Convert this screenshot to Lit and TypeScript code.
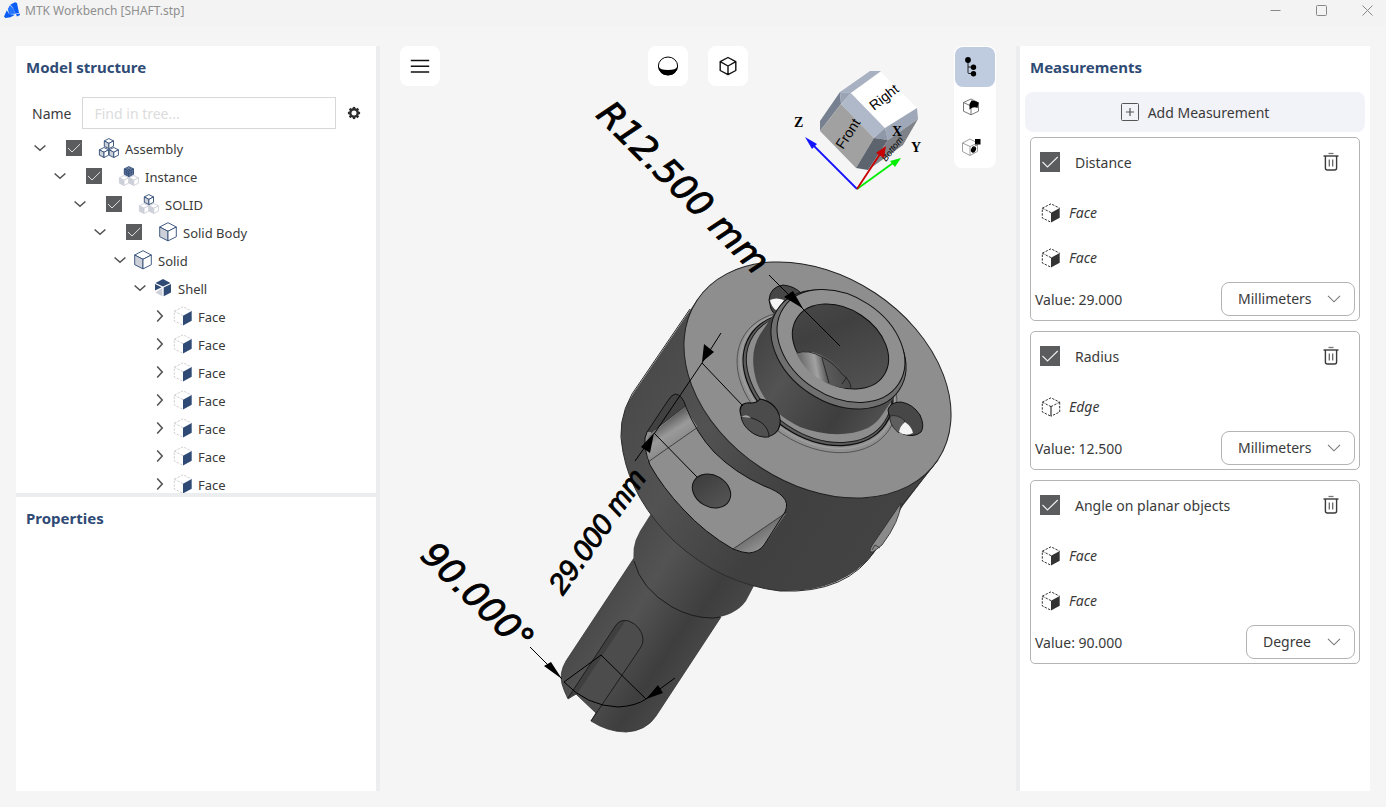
import { LitElement, html, svg, css, nothing } from "lit";
import { customElement, property } from "lit/decorators.js";
import { classMap } from "lit/directives/class-map.js";

const base = css`
  :host {
    font-family: "Noto Sans", "Open Sans", sans-serif;
    color: #3a3a3a;
  }
  * {
    box-sizing: border-box;
  }
  button,
  input,
  select {
    font: inherit;
    color: inherit;
    margin: 0;
  }
  button {
    display: flex;
    align-items: center;
    justify-content: center;
    padding: 0;
    border: 0;
    background: none;
  }
  svg {
    display: block;
  }
  .tick {
    appearance: none;
    flex: none;
    width: 16px;
    height: 16px;
    background: #5b5c5e;
  }
  .tick:checked {
    background: #5b5c5e
      url("data:image/svg+xml,%3Csvg xmlns='http://www.w3.org/2000/svg' viewBox='0 0 16 16'%3E%3Cpath d='M2 8l4 4 8.200-8' fill='none' stroke='%23eee' stroke-width='.9'/%3E%3C/svg%3E")
      center / 100% no-repeat;
  }
`;

/* ---------- icons ---------- */

const NAVY = "#2f4b75";

const smallCube = (x: number, y: number, line: string, top: string, left: string, right: string) => svg`
  <g transform="translate(${x} ${y})" stroke=${line} stroke-width=".9" stroke-linejoin="round">
    <path d="M5 0L9.600 2.300 5 4.800 .4 2.300z" fill=${top} />
    <path d="M.4 2.300L5 4.800V10L.4 7.700z" fill=${left} />
    <path d="M9.600 2.300L5 4.800V10l4.600-2.300z" fill=${right} />
  </g>`;

const cluster = (kind: "assembly" | "instance" | "part") => {
  const pale = (x: number) => smallCube(x, 9.5, "#cdd0d8", "#fff", "#cdd0d8", "#fff");
  const solid = (x: number, y: number) => smallCube(x, y, NAVY, "#fff", "#cdd0d8", "#fff");
  return html`<svg width="22" height="20" viewBox="0 0 22 20" aria-hidden="true">
    ${kind === "assembly" ? [solid(1, 9.5), solid(10.8, 9.5), solid(5.9, 0.6)] : nothing}
    ${kind === "instance" ? [pale(1), pale(10.8), smallCube(5.9, 0.6, NAVY, "#8090ad", "#5a7097", "#6c80a3")] : nothing}
    ${kind === "instance" ? svg`<path d="M8.500 2.200l4.600 2.500M13.200 2.200l-4.600 2.500M6.300 5.500l4.600 2.500M15.500 5.500l-4.600 2.500M8.600 4v5M13.200 4v5" stroke=${NAVY} stroke-width=".7"/>` : nothing}
    ${kind === "part" ? [pale(1), pale(10.8), solid(5.9, 0.6)] : nothing}
  </svg>`;
};

const bodyIcon = html`<svg width="20" height="20" viewBox="0 0 20 20" aria-hidden="true">
  <g stroke=${NAVY} stroke-width=".9" stroke-linejoin="round">
    <path d="M10 .7l8.300 4.300L10 9.300 1.700 5z" fill="#fff" />
    <path d="M1.700 5L10 9.300v9.600l-8.300-4.200z" fill="#cdd0d8" />
    <path d="M18.300 5L10 9.300v9.600l8.300-4.200z" fill="#fff" />
  </g>
</svg>`;

const shellIcon = html`<svg width="20" height="20" viewBox="0 0 20 20" aria-hidden="true">
  <path d="M10 1l7.500 3.900L10 8.400 2.500 4.900z" fill=${NAVY} />
  <path d="M18 6v8.500l-7.300 3.800V9.500z" fill=${NAVY} />
  <path d="M2 6l6.600 3.200L2 12.500z" fill=${NAVY} />
  <path d="M9.300 10v8.300L2.400 14.500z" fill="#cdd0d8" />
</svg>`;

const dashedCube = (line: string, fill: string | null) => html`<svg width="20" height="20" viewBox="0 0 20 20" aria-hidden="true">
  <g fill="none" stroke=${line} stroke-width="1" stroke-dasharray="2.400 1.300">
    <path d="M10 9.600L1.300 5.200v9.800L10 19.200" />
    <path d="M1.300 5.200L10 .8l8.700 4.400" />
    ${fill ? nothing : svg`<path d="M18.700 5.200V15L10 19.200" />`}
    ${fill ? nothing : svg`<path d="M10 9.600l8.700-4.400" />`}
  </g>
  ${fill
    ? svg`<path d="M10 9.700l8.700-4.700v9.800L10 19.400z" fill=${fill} />`
    : svg`<path d="M10 9.600v9.600" stroke=${line} stroke-width="1.200" />`}
</svg>`;

const chevron = (open: boolean) => html`<svg width="20" height="20" viewBox="0 0 20 20" aria-hidden="true">
  <path
    d=${open ? "M4.600 7.500L10 12.300l5.400-4.800" : "M7.200 4.500L12.200 10l-5 5.500"}
    fill="none"
    stroke="#555"
    stroke-width="1.600"
  />
</svg>`;

const gearTeeth = [0, 45, 90, 135, 180, 225, 270, 315];
const gearIcon = html`<svg width="14" height="14" viewBox="0 0 14 14" aria-hidden="true">
  <circle cx="7" cy="7" r="3.700" fill="none" stroke="#2d2d2d" stroke-width="2.400" />
  ${gearTeeth.map((a) => svg`<path d="M5.800 .9h2.400v2H5.800z" fill="#2d2d2d" transform="rotate(${a} 7 7)" />`)}
</svg>`;

const trashIcon = html`<svg width="16" height="20" viewBox="0 0 16 20" aria-hidden="true">
  <g fill="none" stroke="#3a3a3a">
    <path d="M5.500 1.500h5" stroke="#777" stroke-width="1.300" />
    <path d="M.5 4h15" stroke-width="1.400" />
    <path d="M2.400 4v12q0 2 2 2h7.200q2 0 2-2V4" stroke-width="1.400" />
    <path d="M6.300 7.500v7M9.700 7.500v7" stroke="#666" stroke-width="1.300" />
  </g>
</svg>`;

const logoIcon = html`<svg width="16" height="16" viewBox="0 0 16 16" aria-hidden="true">
  <path d="M6.500 2.500L11 .2l2 .8 2 10-3.500.8L9 6z" fill="#0a5cf5" />
  <path d="M6 3l3.500 4 1.800 4.800-6.300.2L3.800 7z" fill="#2474ff" />
  <path d="M2.800 8.200L5 12l6 .8-4.500 2.500L1.500 16 0 14.500z" fill="#0a5cf5" />
  <path d="M12 12.300l3.800-.8.200 1.500-3 1.500z" fill="#0a5cf5" />
</svg>`;

/* ---------- model tree ---------- */

interface Node {
  label: string;
  level: number;
  icon: unknown;
  open: boolean;
  checked?: boolean;
}

const faceNode: Node = { label: "Face", level: 6, icon: dashedCube("#cfcfd2", NAVY), open: false };

const nodes: Node[] = [
  { label: "Assembly", level: 0, icon: cluster("assembly"), open: true, checked: true },
  { label: "Instance", level: 1, icon: cluster("instance"), open: true, checked: true },
  { label: "SOLID", level: 2, icon: cluster("part"), open: true, checked: true },
  { label: "Solid Body", level: 3, icon: bodyIcon, open: true, checked: true },
  { label: "Solid", level: 4, icon: bodyIcon, open: true },
  { label: "Shell", level: 5, icon: shellIcon, open: true },
  ...Array.from({ length: 7 }, () => faceNode),
];

@customElement("model-tree")
export class ModelTree extends LitElement {
  static styles = [
    base,
    css`
      :host {
        display: block;
        overflow: hidden;
      }
      .search {
        display: flex;
        align-items: center;
        gap: 11px;
        margin: 9px 15px 5px 16px;
        font-size: 14px;
      }
      .field {
        flex: 1;
        min-width: 0;
        height: 32px;
        padding: 0 11px;
        border: 1px solid #d8d8d8;
        background: #fff;
      }
      .field::placeholder {
        color: #dcdcdc;
      }
      .rows {
        margin: 0;
        padding: 0 0 0 14px;
        list-style: none;
        font-size: 13px;
      }
      .row {
        display: flex;
        align-items: center;
        height: 28px;
      }
      .label {
        display: flex;
        align-items: center;
        gap: 5px;
        padding-left: 3px;
      }
      .label.checkable {
        padding-left: 16px;
      }
      .label .tick {
        margin-right: 11px;
      }
      .text {
        padding-top: 2px;
      }
    `,
  ];

  render() {
    return html`
      <div class="search">
        <label for="find">Name</label>
        <input id="find" class="field" type="text" placeholder="Find in tree..." />
        <button aria-label="Tree settings">${gearIcon}</button>
      </div>
      <ul class="rows">
        ${nodes.map(
          (n) => html`<li class="row" style="padding-left:${n.level * 20}px">
            <button aria-label=${n.open ? "Collapse" : "Expand"}>${chevron(n.open)}</button>
            <label class=${classMap({ label: true, checkable: !!n.checked })}>
              ${n.checked ? html`<input class="tick" type="checkbox" checked />` : nothing}
              ${n.icon}<span class="text">${n.label}</span>
            </label>
          </li>`
        )}
      </ul>
    `;
  }
}

/* ---------- measurement card ---------- */

interface Measurement {
  title: string;
  objects: string[];
  value: string;
  units: string[];
}

const measurements: Measurement[] = [
  { title: "Distance", objects: ["Face", "Face"], value: "29.000", units: ["Millimeters", "Inches"] },
  { title: "Radius", objects: ["Edge"], value: "12.500", units: ["Millimeters", "Inches"] },
  { title: "Angle on planar objects", objects: ["Face", "Face"], value: "90.000", units: ["Degree", "Radian"] },
];

@customElement("measurement-card")
export class MeasurementCard extends LitElement {
  @property({ attribute: false }) data!: Measurement;

  static styles = [
    base,
    css`
      :host {
        display: block;
        border: 1px solid #b4b4b4;
        border-radius: 5px;
        padding: 0 4px 4px;
        font-size: 14px;
      }
      .head {
        display: flex;
        align-items: center;
        justify-content: space-between;
        height: 48px;
        margin-bottom: 4px;
        padding: 0 16px 0 5px;
      }
      .title {
        display: flex;
        align-items: center;
        gap: 15px;
      }
      .title .tick {
        width: 20px;
        height: 20px;
      }
      .object {
        display: flex;
        align-items: center;
        gap: 8px;
        height: 45px;
        padding-left: 6px;
        font-style: italic;
      }
      .foot {
        display: flex;
        align-items: center;
        justify-content: space-between;
        margin-top: 2px;
      }
      .unit {
        position: relative;
        display: block;
      }
      .unit svg {
        position: absolute;
        right: 14px;
        top: 13px;
        pointer-events: none;
      }
      select {
        display: block;
        appearance: none;
        height: 34px;
        padding: 0 42px 2px 16px;
        border: 1px solid #b4b4b4;
        border-radius: 8px;
        background: #fff;
      }
    `,
  ];

  render() {
    const d = this.data;
    return html`
      <div class="head">
        <label class="title"><input class="tick" type="checkbox" checked />${d.title}</label>
        <button aria-label="Delete ${d.title}">${trashIcon}</button>
      </div>
      ${d.objects.map(
        (o) => html`<div class="object">${dashedCube("#333", o === "Face" ? "#333" : null)}<span>${o}</span></div>`
      )}
      <div class="foot">
        <span>Value: ${d.value}</span>
        <span class="unit">
          <select aria-label="Unit">
            ${d.units.map((u) => html`<option>${u}</option>`)}
          </select>
          <svg width="14" height="10" viewBox="0 0 14 10" aria-hidden="true">
            <path d="M1 .8L7 6.800l6-6" fill="none" stroke="#777" stroke-width="1.100" />
          </svg>
        </span>
      </div>
    `;
  }
}

/* ---------- 3D scene ---------- */

const ring = (cx: number, cy: number, a: number, b: number, fill = "none", stroke = "#151515", w = 1) =>
  svg`<ellipse cx=${cx} cy=${cy} rx=${a} ry=${b} transform="rotate(33.500 ${cx} ${cy})" fill=${fill} stroke=${stroke} stroke-width=${w} />`;

@customElement("model-scene")
export class ModelScene extends LitElement {
  static styles = [
    base,
    css`
      :host {
        display: block;
      }
      svg {
        width: 100%;
        height: 100%;
      }
      .size {
        stroke: #000;
        stroke-width: 0.9px;
      }
      .wide {
        font: italic 35px "DejaVu Sans", sans-serif;
      }
      .narrow {
        font: italic 29px "Liberation Sans", sans-serif;
      }
      .face {
        font: 14px "Liberation Sans", sans-serif;
      }
      .hidden-face {
        font: italic 9px "Liberation Sans", sans-serif;
      }
      .axis {
        font: bold 14px "Liberation Serif", serif;
      }
    `,
  ];

  private shaft() {
    return svg`
      <path d="M634 558L566 661Q559 673 562 684Q564 691 568 699L576 694 596 713 591 721Q608 732 626 732Q646 731 656 716L721 617z" fill="url(#side-s)" stroke="#333" stroke-width=".8"/>
      <path d="M568 698L616 625Q620 619 629 621Q642 627 643 639Q643 644 641 647L596 713 576 694z" fill="#4c4c4c"/>
      <path d="M568 698L617 624Q620 620 626 620L577 694z" fill="#3f3f3f"/>
      <path d="M568 698L616 625Q620 619 629 621Q642 627 643 639Q643 644 641 647L591 721" fill="none" stroke="#191919" stroke-width=".9"/>
      <path d="M652 512L640 531Q630 548 635 565Q643 590 672 607Q692 618 712 618Q735 616 746 601L756 582z" fill="url(#side-c)"/>
      <path d="M634 561Q641 589 672 607Q692 618 712 618Q716 618 720 617" fill="none" stroke="#1c1c1c" stroke-width="1"/>
    `;
  }

  private disc() {
    return svg`
      <path d="M697 300L633.500 393Q616 419 623 452Q632 500 674 541Q721 584 780 591Q842 593 874 553L902 507 938 460z" fill="url(#side-d)"/>
      <path d="M690 309L632 394Q616 422 623 452Q632 500 674 541Q721 584 780 591Q848 594 876 549Q892 526 903 504L938 460" fill="none" stroke="#2c2c2c" stroke-width="1"/>
      <path d="M901 503L873 544Q867 553 873 552L882 545Q900 521 901 503z" fill="#8a8a8a" stroke="#2a2a2a" stroke-width=".8"/>
      <path d="M872 550l3-5 5 3" fill="none" stroke="#222" stroke-width=".7"/>

      <path id="flat" d="M645 438Q644 450 650 465Q663 488 683 509Q705 533 733 549Q743 553 749 553Q759 552 764 545L785 512Q789 503 783 497Q778 491 764 486Q735 473 714 452Q697 434 686 407Q682 394 675 394Q671 395 667 402L647 432z" fill="#8e8e8e"/>
      <path d="M647 432L667 402Q671 394 675 394Q682 394 686 406L652 432z" fill="#414141"/>
      <path d="M649 436L686 406Q691 418 698 428L648 462Q643 446 649 436z" fill="url(#fillet)"/>
      <path d="M733 549L787 512L764 545Q759 552 749 553Q743 553 733 549z" fill="url(#fillet-low)"/>
      <path d="M651 433L685 406M648 462L698 427M733 549L787 512" stroke="#2e2e2e" stroke-width=".8" fill="none"/>
      <path d="M645 438Q644 450 650 465Q663 488 683 509Q705 533 733 549Q743 553 749 553Q759 552 764 545L785 512Q789 503 783 497Q778 491 764 486Q735 473 714 452Q697 434 686 407Q682 394 675 394Q671 395 667 402L647 432z" fill="none" stroke="#101010" stroke-width="1"/>
      <ellipse cx="711.500" cy="491" rx="20.200" ry="15.800" transform="rotate(30 711.500 491)" fill="url(#hole)" stroke="#111"/>

      ${ring(817.5, 380, 144.5, 104.3, "#8e8e8e", "#222", 1)}
    `;
  }

  private groove() {
    return svg`
      ${ring(817, 382, 86.5, 62.5, "#909090", "#4a4a4a", 0.8)}
      ${ring(817.5, 380.5, 83.5, 60, "none", "#a0a0a0", 1.2)}
      ${ring(818, 379.5, 81, 58.5, "#5b5b5b", "#0d0d0d", 1.3)}
      ${ring(819, 378.5, 78.5, 56.5, "#8d8d8d", "#1c1c1c", 1)}
    `;
  }

  private bolts() {
    return svg`
      <path d="M769 300Q770 287 783 285Q794 286 801 293L786 315Q775 318 771 309z" fill="#464646" stroke="#111"/>
      <path d="M770 300Q776 297 784 300L777 311Q771 307 770 300z" fill="#f5f5f5"/>
      <path d="M888 410Q890 402 901 402Q913 404 920 415Q925 426 921 432Q914 438 903 434Q890 426 888 410z" fill="#474747" stroke="#111"/>
      <path d="M890 416Q898 414 905 421L899 433Q892 428 890 420z" fill="#5e5e5e" stroke="#222" stroke-width=".8"/>
      <path d="M905 422Q912 427 913 433Q906 437 899 432Q900 426 905 422z" fill="#f5f5f5"/>
    `;
  }

  private neck() {
    return svg`
      <path d="M777 309L760 334.500Q748 354 757 383Q768 412 800 427Q838 441 868 428Q877 423 882 415L899 390z" fill="url(#side-n)"/>
      ${ring(838.5, 349.5, 73, 52.5, "#6f6f6f", "#141414", 1)}
      ${ring(841, 346, 69, 50, "#8f8f8f", "#111", 1)}
      ${ring(840.5, 346.5, 52, 37.5, "url(#bore)", "#0c0c0c", 1)}
      <path d="M796 353Q816 347 838 366Q849 377 851 388Q838 389 824 382Q805 372 796 353z" fill="url(#bore-light)"/>
      <path d="M822 357Q834 363 842 374Q851 381 851 388M822 358L829 383M842 384l5-7M797 353Q808 349 822 357" fill="none" stroke="#1a1a1a" stroke-width=".8"/>

      <path d="M740 411Q740 402 751 403Q757 403 760 399Q771 401 777 410Q783 420 778 430Q771 440 757 435Q743 429 740 411z" fill="#4b4b4b" stroke="#0c0c0c" stroke-width="1.100"/>
      <path d="M741 417Q752 416 762 423Q769 429 769 437Q758 438 750 431Q743 426 741 417z" fill="#505050" stroke="#151515" stroke-width=".9"/>
      <path d="M741 417q6-4 10 1" fill="#a5a5a5"/>
    `;
  }

  private dimensions() {
    return svg`
      <g fill="none" stroke="#000" stroke-width="1">
        <path d="M769 275L840 346"/>
        <path d="M721 333L702 363 654 434M702 363L743 406M654 433L697 477M635 461L650 440"/>
        <path d="M530 647L562 679M675 678L646 699" />
        <path d="M601 655L564 682Q587 706 618 707Q636 706 646 699z"/>
      </g>
      <path d="M803 308.500L784 297 793 291zM702 362L704 344 714 352zM654 433L641 447 650 453zM562 679L544 666 551 662zM646 699L658 685 663 693z"/>
      <text class="size wide" transform="translate(595 116) rotate(45)">R12.500 mm</text>
      <text class="size narrow" transform="translate(563 596) rotate(-54.500)">29.000 mm</text>
      <text class="size wide" transform="translate(419 557) rotate(44)">90.000°</text>
    `;
  }

  private navCube() {
    return svg`
      <path d="M840 92L870 71H881L851 93z" fill="#a8b1c1"/>
      <path d="M840 92L841 104 820 131V121z" fill="#768090"/>
      <path d="M840 92L851 93 841 104z" fill="#9aa4b5"/>
      <path d="M851 93L885 128 874 138 841 104z" fill="#b0b9c9"/>
      <path d="M851 93L881 72 917 108 885 128z" fill="#fff"/>
      <path d="M885 128L917 108 918 119 888 140z" fill="#9fa8b9"/>
      <path d="M885 128L888 140 874 138z" fill="#8f98a9"/>
      <path d="M841 104L874 138 856 168 820 131z" fill="#a1a1a1"/>
      <path d="M874 138L888 140 868 170 856 168z" fill="#5d646e"/>
      <path d="M888 140L918 119 903 145 868 170z" fill="#7f8389"/>
      <text class="hidden-face" transform="translate(886 162) rotate(-52)">Bottom</text>
      <text class="face" transform="translate(874 111) rotate(-38)">Right</text>
      <text class="face" transform="translate(843 150) rotate(-57)">Front</text>
      <g stroke-width="1.800">
        <path d="M857 189L812 144" stroke="#1414ff"/>
        <path d="M857 189L893 163" stroke="#00ee00"/>
        <path d="M857 189L880 154" stroke="#c80000"/>
      </g>
      <path d="M805 137L817 144 812 149z" fill="#1414ff"/>
      <path d="M901 158L895 167 890 161z" fill="#00ee00"/>
      <path d="M886 146L884 158 876 153z" fill="#c80000"/>
      <text class="axis" x="794" y="127">Z</text>
      <text class="axis" x="892" y="136">X</text>
      <text class="axis" x="911" y="152">Y</text>
    `;
  }

  render() {
    return html`<svg viewBox="380 46 636 745" role="img" aria-label="Shaft model with measurements">
      <defs>
        <linearGradient id="side-d" gradientUnits="userSpaceOnUse" x1="633" y1="393" x2="874" y2="553">
          <stop offset="0" stop-color="#4a4a4a" /><stop offset=".28" stop-color="#525252" />
          <stop offset=".65" stop-color="#404040" /><stop offset="1" stop-color="#434343" />
        </linearGradient>
        <linearGradient id="side-c" gradientUnits="userSpaceOnUse" x1="640" y1="531" x2="746" y2="601">
          <stop offset="0" stop-color="#4a4a4a" /><stop offset=".3" stop-color="#535353" />
          <stop offset=".75" stop-color="#3e3e3e" /><stop offset="1" stop-color="#474747" />
        </linearGradient>
        <linearGradient id="side-s" gradientUnits="userSpaceOnUse" x1="566" y1="660" x2="656" y2="719">
          <stop offset="0" stop-color="#4a4a4a" /><stop offset=".3" stop-color="#535353" />
          <stop offset=".75" stop-color="#3e3e3e" /><stop offset="1" stop-color="#474747" />
        </linearGradient>
        <linearGradient id="side-n" gradientUnits="userSpaceOnUse" x1="760" y1="334" x2="882" y2="415">
          <stop offset="0" stop-color="#444" /><stop offset=".3" stop-color="#535353" />
          <stop offset=".75" stop-color="#3e3e3e" /><stop offset="1" stop-color="#4f4f4f" />
        </linearGradient>
        <linearGradient id="bore" gradientUnits="userSpaceOnUse" x1="797" y1="318" x2="884" y2="375">
          <stop offset="0" stop-color="#474747" /><stop offset=".3" stop-color="#404040" />
          <stop offset="1" stop-color="#525252" />
        </linearGradient>
        <linearGradient id="bore-light" gradientUnits="userSpaceOnUse" x1="803" y1="372" x2="848" y2="364">
          <stop offset="0" stop-color="#6e6e6e" /><stop offset=".3" stop-color="#a2a2a2" />
          <stop offset=".5" stop-color="#5a5a5a" /><stop offset="1" stop-color="#484848" />
        </linearGradient>
        <linearGradient id="fillet" gradientUnits="userSpaceOnUse" x1="665" y1="415" x2="681" y2="440">
          <stop offset="0" stop-color="#4a4a4a" /><stop offset=".6" stop-color="#9a9a9a" />
          <stop offset="1" stop-color="#8c8c8c" />
        </linearGradient>
        <linearGradient id="fillet-low" gradientUnits="userSpaceOnUse" x1="757" y1="528" x2="768" y2="545">
          <stop offset="0" stop-color="#6a6a6a" /><stop offset="1" stop-color="#949494" />
        </linearGradient>
        <linearGradient id="hole" gradientUnits="userSpaceOnUse" x1="693" y1="482" x2="731" y2="500">
          <stop offset="0" stop-color="#3d3d3d" /><stop offset="1" stop-color="#555" />
        </linearGradient>
      </defs>
      ${this.shaft()} ${this.disc()} ${this.groove()} ${this.bolts()} ${this.neck()} ${this.dimensions()}
      ${this.navCube()}
    </svg>`;
  }
}

/* ---------- page ---------- */

@customElement("app-root")
export class AppRoot extends LitElement {
  static styles = [
    base,
    css`
      :host {
        display: flex;
        flex-direction: column;
        height: 100vh;
        background: #f5f5f5;
        overflow: hidden;
      }
      .bar {
        display: flex;
        align-items: center;
        gap: 5px;
        height: 26px;
        padding: 0 0 6px 4px;
        background: #f3f3f3;
        color: #8f8f8f;
        font-size: 12px;
      }
      .name {
        flex: 1;
      }
      .window {
        display: flex;
        gap: 8px;
      }
      .window button {
        width: 38px;
        height: 20px;
      }
      main {
        flex: 1;
        min-height: 0;
        display: grid;
        grid-template: minmax(0, 1fr) / 364px minmax(0, 1fr) 354px;
        padding: 20px 16px 16px;
      }
      .left {
        display: flex;
        flex-direction: column;
        border-right: 4px solid #ebedee;
        background: #fff;
      }
      .right {
        border-left: 4px solid #ebedee;
        background: #fff;
      }
      .structure {
        display: flex;
        flex-direction: column;
        flex: 0 0 60%;
        min-height: 0;
      }
      model-tree {
        flex: 1;
        min-height: 0;
      }
      .properties {
        flex: 1;
        border-top: 4px solid #ebedee;
      }
      h2 {
        margin: 0 0 0 10px;
        color: #2f4b75;
        font-size: 15px;
        font-weight: 700;
        line-height: 42px;
      }
      .add {
        width: calc(100% - 10px);
        height: 40px;
        margin: 4px 5px 5px;
        gap: 9px;
        border-radius: 8px;
        background: #f2f3f8;
        font-size: 14px;
      }
      .cards {
        display: flex;
        flex-direction: column;
        gap: 10px;
        padding: 0 10px;
      }
      .view {
        display: grid;
        grid-template: minmax(0, 1fr) / minmax(0, 1fr);
      }
      .view > * {
        grid-area: 1 / 1;
      }
      .tools {
        display: grid;
        grid-template-columns: 1fr auto 1fr;
        align-items: start;
        justify-items: start;
        padding: 0 20px;
      }
      .tool,
      .mode {
        width: 40px;
        height: 40px;
        border-radius: 8px;
        background: #fff;
      }
      .center {
        display: flex;
        gap: 20px;
      }
      .modes {
        justify-self: end;
        padding: 1px;
        border-radius: 8px;
        background: #fff;
      }
      .mode.active {
        background: #bfcbdf;
      }
    `,
  ];

  render() {
    return html`
      <header class="bar">
        ${logoIcon}<span class="name">MTK Workbench [SHAFT.stp]</span>
        <div class="window">
          <button aria-label="Minimize">
            <svg width="11" height="11" viewBox="0 0 11 11"><path d="M.5 5.500h10" stroke="#888" /></svg>
          </button>
          <button aria-label="Maximize">
            <svg width="11" height="11" viewBox="0 0 11 11">
              <rect x=".5" y=".5" width="10" height="10" rx="1" fill="none" stroke="#888" />
            </svg>
          </button>
          <button aria-label="Close">
            <svg width="11" height="11" viewBox="0 0 11 11"><path d="M.5.5l10 10M10.500.5l-10 10" stroke="#888" /></svg>
          </button>
        </div>
      </header>
      <main>
        <aside class="left">
          <section class="structure">
            <h2>Model structure</h2>
            <model-tree></model-tree>
          </section>
          <section class="properties"><h2>Properties</h2></section>
        </aside>
        <section class="view">
          <model-scene></model-scene>
          <div class="tools">
            <button class="tool" aria-label="Menu">
              <svg width="20" height="20" viewBox="0 0 20 20">
                <path d="M.8 4.500h18.400M.8 10.300h18.400M.8 16.100h18.400" stroke="#111" stroke-width="1.500" />
              </svg>
            </button>
            <div class="center">
              <button class="tool" aria-label="Shading">
                <svg width="22" height="20" viewBox="0 0 22 20">
                  <ellipse cx="11" cy="10" rx="9.600" ry="9" fill="#fff" stroke="#000" />
                  <path d="M1.400 10.500Q3 14 11 14t9.600-3.500Q20 19 11 19.300 2 19 1.400 10.500z" />
                </svg>
              </button>
              <button class="tool" aria-label="View cube">
                <svg width="20" height="20" viewBox="0 0 20 20">
                  <path
                    d="M10 1.500l7.800 4.200v8.800L10 18.700l-7.800-4.200V5.700zM2.200 5.700L10 10l7.800-4.300M10 10v8.700"
                    fill="none" stroke="#111" stroke-width="1.400" stroke-linejoin="round" />
                </svg>
              </button>
            </div>
            <div class="modes">
              <button class="mode active" aria-label="Structure">
                <svg width="32" height="24" viewBox="0 0 32 24">
                  <path d="M9 5v12.500q0 1 1 1h5M9 12h6" fill="none" stroke="#222" />
                  <circle cx="9" cy="5" r="2.900" /><circle cx="14.500" cy="12.300" r="2.700" /><circle cx="14.500" cy="18.700" r="2.700" />
                </svg>
              </button>
              <button class="mode" aria-label="Face selection">
                <svg width="32" height="24" viewBox="0 0 32 24">
                  <path d="M4.500 7.500L12 4l7.500 3.800v8.400L12 19.800l-7.500-3.600zM4.500 7.500L12 11v8.800M12 11l7.500-3.200" fill="none" stroke="#555" stroke-width=".8" />
                  <path d="M12.500 5.500q3.500 0 7 2L18.500 13q-4-2-8 1.500V9z" />
                </svg>
              </button>
              <button class="mode" aria-label="Feature selection">
                <svg width="32" height="24" viewBox="0 0 32 24">
                  <path d="M3.500 8L11 4l7.500 4v8.400L11 20.500l-7.500-4zM3.500 8L11 11.500v9M11 11.500L18.500 8" fill="none" stroke="#888" stroke-width=".8" />
                  <rect x="16" y="4" width="5.500" height="5.500" />
                  <ellipse cx="14.500" cy="14.500" rx="2.400" ry="3.300" transform="rotate(25 14.500 14.500)" />
                  <path d="M15 13l4-5" stroke="#222" stroke-dasharray="1.500 1" />
                </svg>
              </button>
            </div>
          </div>
        </section>
        <aside class="right">
          <h2>Measurements</h2>
          <button class="add">
            <svg width="18" height="18" viewBox="0 0 18 18" aria-hidden="true">
              <rect x=".5" y=".5" width="17" height="17" rx="1" fill="none" stroke="#555" />
              <path d="M9 5v8M5 9h8" stroke="#555" stroke-width="1.200" />
            </svg>
            Add Measurement
          </button>
          <div class="cards">
            ${measurements.map((m) => html`<measurement-card .data=${m}></measurement-card>`)}
          </div>
        </aside>
      </main>
    `;
  }
}
